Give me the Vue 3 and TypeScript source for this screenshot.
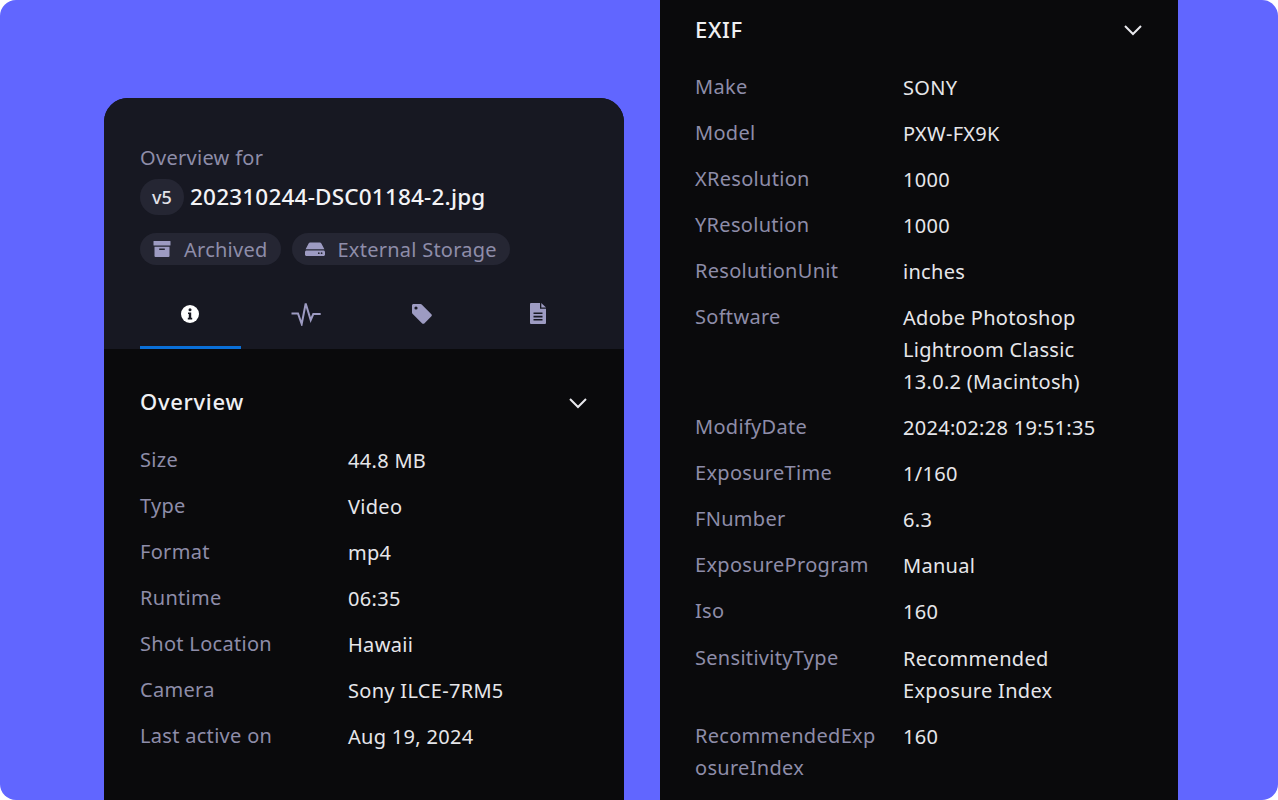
<script setup lang="ts">
interface Row { label: string; value: string }

const overview: Row[] = [
  { label: 'Size', value: '44.8 MB' },
  { label: 'Type', value: 'Video' },
  { label: 'Format', value: 'mp4' },
  { label: 'Runtime', value: '06:35' },
  { label: 'Shot Location', value: 'Hawaii' },
  { label: 'Camera', value: 'Sony ILCE-7RM5' },
  { label: 'Last active on', value: 'Aug 19, 2024' },
]

const exif: Row[] = [
  { label: 'Make', value: 'SONY' },
  { label: 'Model', value: 'PXW-FX9K' },
  { label: 'XResolution', value: '1000' },
  { label: 'YResolution', value: '1000' },
  { label: 'ResolutionUnit', value: 'inches' },
  { label: 'Software', value: 'Adobe Photoshop Lightroom Classic 13.0.2 (Macintosh)' },
  { label: 'ModifyDate', value: '2024:02:28 19:51:35' },
  { label: 'ExposureTime', value: '1/160' },
  { label: 'FNumber', value: '6.3' },
  { label: 'ExposureProgram', value: 'Manual' },
  { label: 'Iso', value: '160' },
  { label: 'SensitivityType', value: 'Recommended Exposure Index' },
  { label: 'RecommendedExposureIndex', value: '160' },
]
</script>

<template>
  <div class="page">
    <div class="stage">
      <section class="card">
        <header class="head">
          <div class="eyebrow">Overview for</div>
          <div class="title-row">
            <span class="version">v5</span>
            <span class="filename">202310244-DSC01184-2.jpg</span>
          </div>
          <div class="chips">
            <span class="chip">
              <svg width="20" height="18" viewBox="0 0 20 18" fill="#9d9bc2">
                <rect x="1.500" y="1" width="17" height="4.600" rx="0.600" />
                <path fill-rule="evenodd" d="M2.500 6.800h15v9.200a1 1 0 0 1-1 1h-13a1 1 0 0 1-1-1zM7.200 8.600v1.500h5.600V8.600z" />
              </svg>
              Archived
            </span>
            <span class="chip">
              <svg width="22" height="18" viewBox="0 0 22 18" fill="#9d9bc2">
                <path d="M6.200 2.500h9.600c.7 0 1.300.4 1.600 1l3 5.700H1.600l3-5.700c.3-.6.9-1 1.600-1z" />
                <path fill-rule="evenodd" d="M2.500 10.400h17c.8 0 1.500.7 1.500 1.500v2.600c0 .8-.7 1.500-1.500 1.500h-17c-.8 0-1.500-.7-1.500-1.500v-2.600c0-.8.7-1.500 1.500-1.500zM14.800 12.300a.9.9 0 1 0 0 1.800.9.9 0 0 0 0-1.800zM17.600 12.300a.9.9 0 1 0 0 1.800.9.9 0 0 0 0-1.800z" />
              </svg>
              External Storage
            </span>
          </div>
          <nav class="tabs">
            <div class="tab active">
              <svg width="18" height="18" viewBox="0 0 18 18">
                <circle cx="9" cy="9" r="9" fill="#fff" />
                <circle cx="9" cy="4.700" r="1.500" fill="#171822" />
                <path d="M7 7.500h3.200v5.300h1v1.600H6.800v-1.600h1V9.100H7z" fill="#171822" />
              </svg>
            </div>
            <div class="tab">
              <svg width="30" height="24" viewBox="0 0 30 24" fill="none" stroke="#9d9bc2" stroke-width="2">
                <path d="M.5 11.500H7L10.700 22 14.700 1.500 19.700 18 22.300 12h7.400" />
              </svg>
            </div>
            <div class="tab">
              <svg width="22" height="22" viewBox="0 0 22 22" fill="#9d9bc2">
                <path fill-rule="evenodd" d="M1 2.500C1 1.700 1.700 1 2.500 1h7c.5 0 .9.200 1.200.5l9.700 9.700c.6.600.6 1.500 0 2.100l-7.100 7.100c-.6.600-1.500.600-2.100 0L1.500 10.700c-.3-.3-.5-.7-.5-1.200zM5 3.400a1.600 1.600 0 1 0 0 3.200 1.600 1.600 0 0 0 0-3.200z" />
              </svg>
            </div>
            <div class="tab">
              <svg width="16" height="21" viewBox="0 0 16 21" fill="#9d9bc2">
                <path fill-rule="evenodd" d="M1 0h9v5.800h6V20a1 1 0 0 1-1 1H1a1 1 0 0 1-1-1V1a1 1 0 0 1 1-1zM3.500 9.500v1.600h9V9.500zM3.500 12.800v1.600h9v-1.600zM3.500 16.100v1.300h9v-1.300z" />
                <path d="M11.300 0L16 4.500h-4.700z" />
              </svg>
            </div>
          </nav>
        </header>
        <div class="body">
          <div class="section-head">
            <h2>Overview</h2>
            <svg class="chevron" width="20" height="12" viewBox="0 0 20 12" fill="none" stroke="#e9e9ee" stroke-width="2">
              <path d="M2 2l8 8 8-8" />
            </svg>
          </div>
          <dl class="rows">
            <template v-for="row in overview" :key="row.label">
              <dt>{{ row.label }}</dt>
              <dd>{{ row.value }}</dd>
            </template>
          </dl>
        </div>
      </section>

      <section class="panel">
        <div class="section-head">
          <h2>EXIF</h2>
          <svg class="chevron" width="20" height="12" viewBox="0 0 20 12" fill="none" stroke="#e9e9ee" stroke-width="2">
            <path d="M2 2l8 8 8-8" />
          </svg>
        </div>
        <dl class="rows">
          <template v-for="row in exif" :key="row.label">
            <dt>{{ row.label }}</dt>
            <dd>{{ row.value }}</dd>
          </template>
        </dl>
      </section>
    </div>
  </div>
</template>

<style scoped>
.page {
  width: 1278px;
  height: 800px;
  background: #fff;
  overflow: hidden;
  font-family: "Noto Sans", "Open Sans", sans-serif;
}
.stage {
  height: 800px;
  background: #6166ff;
  border-radius: 16px;
  overflow: hidden;
  display: flex;
  align-items: flex-start;
  padding-left: 104px;
  gap: 36px;
}
.card {
  width: 520px;
  height: 702px;
  margin-top: 98px;
  border-radius: 24px 24px 0 0;
  overflow: hidden;
  background: #0a0a0c;
  flex: none;
}
.head {
  background: #171822;
  padding: 46px 36px 0;
  height: 251px;
  box-sizing: border-box;
}
.eyebrow {
  font-size: 20px;
  line-height: 28px;
  color: #8e8da9;
  letter-spacing: 0.3px;
}
.title-row {
  display: flex;
  align-items: center;
  gap: 6px;
  margin-top: 7px;
}
.version {
  width: 44px;
  height: 36px;
  border-radius: 18px;
  background: #252633;
  color: #e2e2e8;
  font-size: 18px;
  font-weight: 500;
  display: flex;
  align-items: center;
  justify-content: center;
}
.filename {
  color: #f3f3f6;
  font-size: 22.500px;
  font-weight: 500;
  line-height: 36px;
  letter-spacing: 0.2px;
}
.chips {
  display: flex;
  gap: 11px;
  margin-top: 18px;
}
.chip {
  height: 32px;
  border-radius: 16px;
  background: #252633;
  color: #8e8da9;
  font-size: 20px;
  letter-spacing: 0.25px;
  display: flex;
  align-items: center;
  gap: 12px;
  padding: 0 13px 0 12px;
}
.tabs {
  display: grid;
  grid-template-columns: repeat(4, 101px);
  column-gap: 15px;
  margin-top: 22px;
}
.tab {
  height: 62px;
  display: flex;
  align-items: center;
  justify-content: center;
  padding: 0 2px 9px 0;
  box-sizing: border-box;
}
.tab.active {
  border-bottom: 3px solid #0a6fd8;
  padding-bottom: 6px;
}
.body {
  padding: 34px 36px 0;
}
.section-head {
  display: flex;
  align-items: center;
  justify-content: space-between;
  height: 36px;
}
.section-head h2 {
  margin: 0;
  font-size: 22px;
  font-weight: 500;
  letter-spacing: 0.7px;
  color: #f0f0f3;
}
.chevron {
  margin-top: 2px;
}
.body .chevron {
  margin-top: 4px;
}
.rows {
  margin: 25px 0 0;
  display: grid;
  grid-template-columns: 208px 1fr;
  row-gap: 14.050px;
}
.body .rows {
  margin-top: 26px;
}
.rows dt {
  font-size: 20px;
  line-height: 32px;
  color: #8e8da9;
  letter-spacing: 0.3px;
  overflow-wrap: anywhere;
  margin-top: -1px;
  padding-right: 24px;
  min-width: 0;
}
.rows dd {
  margin: 0;
  font-size: 20px;
  line-height: 32px;
  letter-spacing: 0.3px;
  color: #e6e6ea;
  max-width: 194px;
}
.panel {
  width: 518px;
  height: 800px;
  background: #0a0a0c;
  box-sizing: border-box;
  padding: 11px 35px 0;
  flex: none;
}
</style>
